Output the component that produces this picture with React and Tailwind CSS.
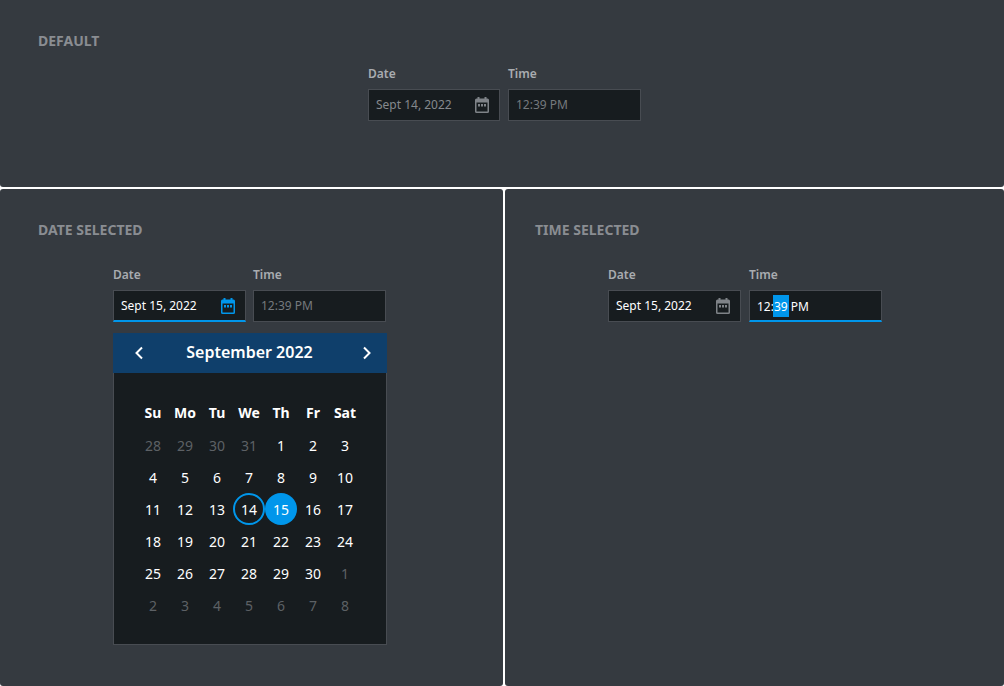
const days = [
  ['28', true], ['29', true], ['30', true], ['31', true], ['1'], ['2'], ['3'],
  ['4'], ['5'], ['6'], ['7'], ['8'], ['9'], ['10'],
  ['11'], ['12'], ['13'], ['14'], ['15'], ['16'], ['17'],
  ['18'], ['19'], ['20'], ['21'], ['22'], ['23'], ['24'],
  ['25'], ['26'], ['27'], ['28'], ['29'], ['30'], ['1', true],
  ['2', true], ['3', true], ['4', true], ['5', true], ['6', true], ['7', true], ['8', true],
];

const CalendarIcon = ({ active }) => (
  <svg width="14" height="16" viewBox="0 0 14 16" className={active ? 'text-[#0096eb]' : 'text-[#7f8388]'}>
    <path
      fill="currentColor"
      fillRule="evenodd"
      d="M2.5 0h2v1.5h5V0h2v1.5H12.5A1.5 1.5 0 0 1 14 3v11.5a1.5 1.5 0 0 1-1.5 1.5h-11A1.5 1.5 0 0 1 0 14.5V3a1.5 1.5 0 0 1 1.5-1.5h1V0zM1.5 5.5v9h11v-9h-11z"
    />
    <rect x="3" y="7" width="2" height="2.5" fill="currentColor" />
    <rect x="6" y="7" width="2" height="2.5" fill="currentColor" />
    <rect x="9" y="7" width="2" height="2.5" fill="currentColor" />
  </svg>
);

const Fields = ({ date, dateOn, timeOn, dateValue, timeFilled, dateWidth, gap }) => (
  <div className={`flex ${gap}`}>
    <div className={dateWidth}>
      <div className="mb-[7px] text-[12px] leading-[17px] font-semibold text-[#a9acb0]">Date</div>
      <div className={`flex h-[32px] items-center justify-between border border-[#484c52] bg-[#171c1f] pl-[7px] pr-[10px] text-[12px] ${dateOn ? 'border-b-2 border-b-[#0096eb]' : ''} ${dateValue ? 'text-white' : 'text-[#85898d]'}`}>
        <span>{date}</span>
        <CalendarIcon active={dateOn} />
      </div>
    </div>
    <div className="w-[133px]">
      <div className="mb-[7px] text-[12px] leading-[17px] font-semibold text-[#a9acb0]">Time</div>
      <div className={`flex h-[32px] items-center border border-[#484c52] bg-[#171c1f] pl-[7px] text-[12px] ${timeOn ? 'border-b-2 border-b-[#0096eb]' : ''} ${timeFilled ? 'text-white' : 'text-[#75797d]'}`}>
        {timeOn ? (
          <span>12:<span className="-mr-px -ml-px inline-block h-[22px] bg-[#0096eb] pr-px pl-px leading-[24px]">39</span> PM</span>
        ) : (
          <span>12:39 PM</span>
        )}
      </div>
    </div>
  </div>
);

const Calendar = () => (
  <div className="mt-[11px] w-[274px] border border-t-0 border-[#484c52] bg-[#171c1f]">
    <div className="-mx-px flex h-[40px] items-center justify-between bg-[#0f3f6b] pr-[14px] pl-[20px] text-white">
      <svg width="12" height="14" viewBox="0 0 12 14" fill="none" stroke="currentColor" strokeWidth="2"><path d="M9 1.5 3.5 7 9 12.5" /></svg>
      <span className="mr-[7px] -translate-y-px text-[16px] font-semibold">September 2022</span>
      <svg width="12" height="14" viewBox="0 0 12 14" fill="none" stroke="currentColor" strokeWidth="2"><path d="M3 1.5 8.5 7 3 12.5" /></svg>
    </div>
    <div className="grid grid-cols-[repeat(7,32px)] pt-[23px] pb-[23px] pl-[23px]">
      {['Su', 'Mo', 'Tu', 'We', 'Th', 'Fr', 'Sat'].map((d) => (
        <div key={d} className="mb-px flex h-[32px] items-center justify-center text-[14px] font-bold text-white">{d}</div>
      ))}
      {days.map(([d, muted], i) => (
        <div
          key={i}
          className={`flex h-[32px] items-center justify-center rounded-full text-[14px] ${muted ? 'text-[#5d6165]' : 'text-white'} ${i === 17 ? 'border-2 border-[#0096eb]' : ''} ${i === 18 ? 'bg-[#0096eb]' : ''}`}
        >
          {d}
        </div>
      ))}
    </div>
  </div>
);

export default function App() {
  return (
    <div className="flex h-[686px] w-[1004px] flex-col gap-[2px] overflow-hidden bg-white font-['Noto_Sans','Open_Sans',sans-serif]">
      <section className="h-[187px] rounded-b-[3px] bg-[#353a40] pt-[31px]">
        <h2 className="pl-[38px] text-[14px] leading-[19px] font-bold text-[#8a8d92]">DEFAULT</h2>
        <div className="mt-[15px] ml-[368px]">
          <Fields date="Sept 14, 2022" dateWidth="w-[132px]" gap="gap-2" />
        </div>
      </section>
      <div className="flex flex-1 gap-[2px]">
        <section className="w-[503px] rounded-[3px] bg-[#353a40] pt-[31px]">
          <h2 className="pl-[38px] text-[14px] leading-[19px] font-bold text-[#8a8d92]">DATE SELECTED</h2>
          <div className="mt-[27px] ml-[113px] w-[274px]">
            <Fields date="Sept 15, 2022" dateOn dateValue dateWidth="w-[133px]" gap="gap-[7px]" />
            <Calendar />
          </div>
        </section>
        <section className="flex-1 rounded-[3px] bg-[#353a40] pt-[31px]">
          <h2 className="pl-[30px] text-[14px] leading-[19px] font-bold text-[#8a8d92]">TIME SELECTED</h2>
          <div className="mt-[27px] ml-[103px]">
            <Fields date="Sept 15, 2022" dateValue timeOn timeFilled dateWidth="w-[133px]" gap="gap-2" />
          </div>
        </section>
      </div>
    </div>
  );
}
